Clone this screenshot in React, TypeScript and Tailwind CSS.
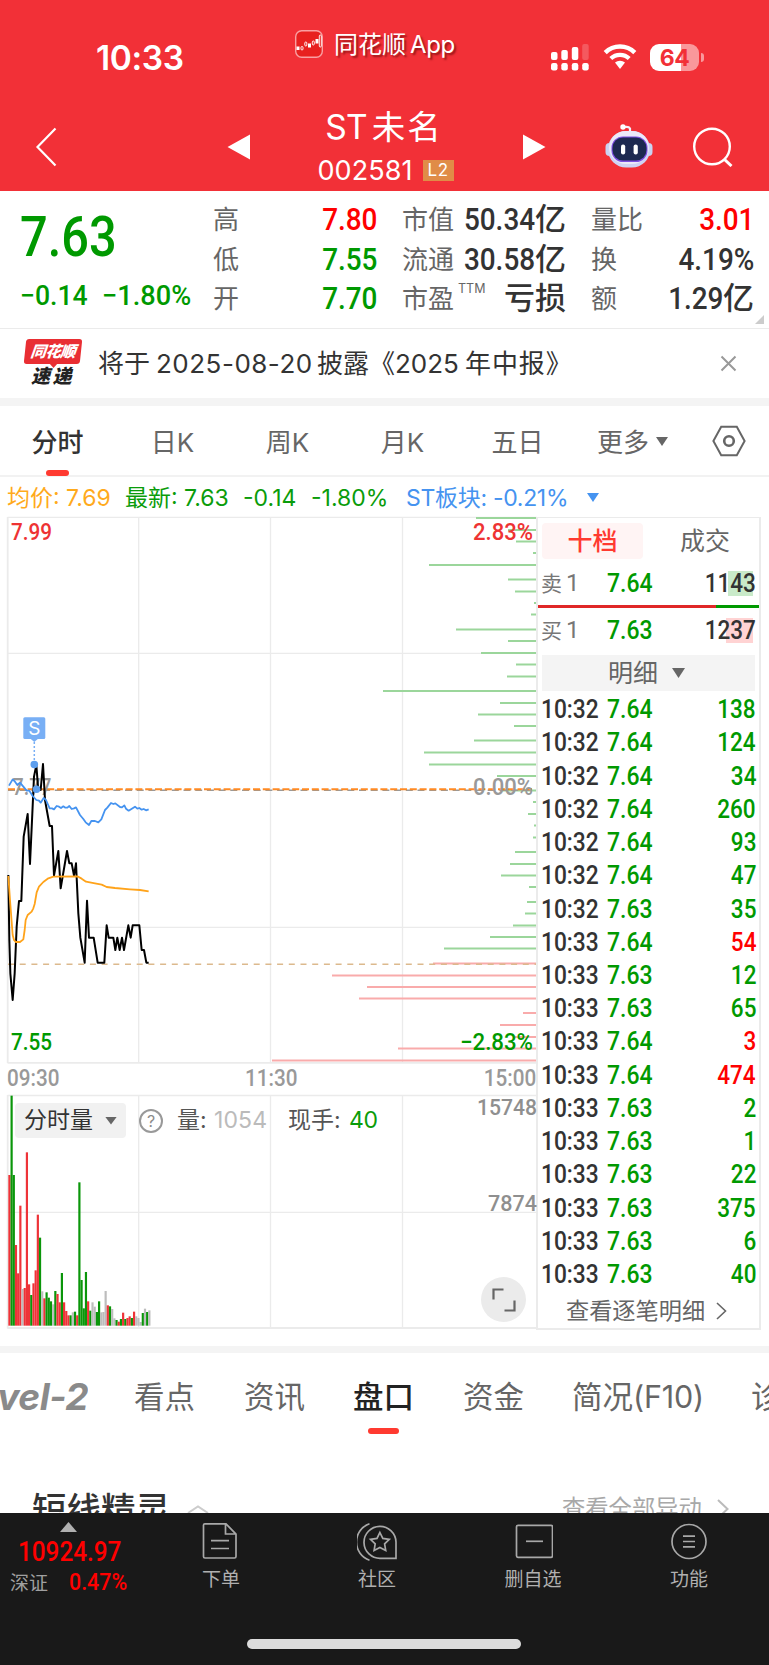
import type { ReactNode } from 'react';
import { clsx } from 'clsx';

type Tone = 'up' | 'down' | 'flat';

const TEXT_TONE: Record<Tone, string> = {
  up: 'text-[#ff0000]',
  down: 'text-[#009900]',
  flat: 'text-[#333333]',
};

const DIN = "[font-family:Roboto,'Noto_Sans_CJK_SC',sans-serif]";

// [y, left] of every order stacked on the right edge of the price chart
const SELL_DEPTH: [number, number][] = [
  [518, 476], [530, 508], [541.5, 516], [553, 533], [565, 429], [579.5, 508], [591.5, 515], [603, 534],
  [614.5, 531], [629.5, 456], [641, 508], [653, 481], [664.5, 516], [676.5, 507], [691, 383], [703, 500],
  [714.5, 478], [726, 514], [740.5, 474], [752.5, 424], [764.5, 429], [776, 497], [790.5, 502], [802, 533],
  [814, 528], [825.5, 534], [837.5, 533], [852, 515], [864, 510], [875.5, 501], [887, 529], [902, 527],
  [913.5, 525], [925.5, 513], [937, 490], [948.5, 444],
];

const BUY_DEPTH: [number, number][] = [
  [963.5, 433], [975.5, 332], [987, 367], [998.5, 359], [1013, 523], [1025, 500], [1037, 515], [1048.5, 398], [1060.5, 272],
];

const PRICE =
  '25,405 28,600 31,700 38,780 44,700 50,560 57,483 64,483 71,290 83,222 90,372 97,220 102,110 109,75 114,140 122,150 129,72 135,180 149,258 156,258 162,407 175,333 182,445 201,333 208,370 215,370 222,407 228,370 235,520 241,593 254,668 261,482 267,593 281,593 293,668 313,668 320,556 326,593 340,593 346,630 352,593 359,630 366,593 372,630 385,556 392,593 398,556 418,556 425,630 432,630 439,668 446,668';
const SECTOR =
  '27,137 38,118 45,125 52,135 60,128 70,140 80,152 88,152 98,168 109,180 117,182 122,188 131,174 138,180 149,205 156,205 162,208 170,198 177,200 183,204 190,199 196,203 202,203 208,198 215,207 222,205 228,202 240,225 250,237 257,247 267,255 274,243 285,243 295,247 304,238 315,210 322,203 333,189 340,192 346,190 360,201 366,202 373,196 378,206 386,212 405,200 412,206 418,204 425,209 431,207 438,211 446,208';
const AVERAGE =
  '25,408 30,480 38,585 42,600 47,606 60,606 70,598 74,570 77,540 83,525 95,515 100,505 104,492 110,457 117,440 130,426 145,415 160,410 232,409 245,416 258,425 285,430 305,434 320,441 345,444 390,448 420,450 446,454';

// r = rise, g = fall, n = unchanged
const VOLUME: [string, number][] = [
  ['r', 452], ['g', 690], ['g', 452], ['r', 242], ['r', 157], ['r', 360], ['n', 110], ['r', 113], ['r', 520], ['r', 124],
  ['g', 92], ['r', 127], ['r', 166], ['r', 333], ['g', 264], ['n', 103], ['r', 82], ['g', 100], ['g', 84], ['g', 73],
  ['n', 64], ['g', 104], ['r', 95], ['r', 70], ['g', 158], ['r', 70], ['r', 44], ['r', 31], ['g', 31], ['n', 40],
  ['g', 42], ['r', 31], ['g', 430], ['g', 137], ['g', 52], ['g', 161], ['r', 73], ['g', 45], ['n', 70], ['n', 57],
  ['g', 41], ['g', 73], ['n', 40], ['n', 41], ['n', 104], ['r', 61], ['g', 58], ['n', 50], ['n', 22], ['g', 17],
  ['r', 12], ['g', 20], ['r', 39], ['g', 20], ['r', 23], ['r', 28], ['g', 23], ['r', 42], ['n', 28], ['n', 23],
  ['n', 11], ['g', 38], ['n', 51], ['g', 41], ['n', 46],
];
const VOLUME_FILL: Record<string, string> = { r: '#ee3338', g: '#0a960a', n: '#bdbdbd' };

const TICKS: [string, string, string, Tone][] = [
  ['10:32', '7.64', '138', 'down'],
  ['10:32', '7.64', '124', 'down'],
  ['10:32', '7.64', '34', 'down'],
  ['10:32', '7.64', '260', 'down'],
  ['10:32', '7.64', '93', 'down'],
  ['10:32', '7.64', '47', 'down'],
  ['10:32', '7.63', '35', 'down'],
  ['10:33', '7.64', '54', 'up'],
  ['10:33', '7.63', '12', 'down'],
  ['10:33', '7.63', '65', 'down'],
  ['10:33', '7.64', '3', 'up'],
  ['10:33', '7.64', '474', 'up'],
  ['10:33', '7.63', '2', 'down'],
  ['10:33', '7.63', '1', 'down'],
  ['10:33', '7.63', '22', 'down'],
  ['10:33', '7.63', '375', 'down'],
  ['10:33', '7.63', '6', 'down'],
  ['10:33', '7.63', '40', 'down'],
];

function StatusBar() {
  return (
    <div className="flex h-[104px] pt-[30px] text-white">
      <div className="ml-[96px] mt-[11px] w-[199px] text-[33.5px] font-semibold leading-[34px] tracking-[-0.4px]">10:33</div>
      <svg width="28" height="28" viewBox="0 0 28 28" className="shrink-0">
        <rect x="0.7" y="0.7" width="26.6" height="26.6" rx="6" fill="#e8201f" stroke="#f9a0a2" strokeWidth="1.4" />
        <g fill="#fff">
          <rect x="1.5" y="16.5" width="3" height="3.5" />
          <rect x="13" y="13.5" width="3" height="4" />
          <rect x="20.5" y="9" width="3" height="4.5" />
        </g>
        <g fill="none" stroke="#fff" strokeWidth="0.9">
          <rect x="6" y="16.5" width="2" height="3.5" rx="1" />
          <rect x="9.8" y="12" width="2" height="4" rx="1" />
          <rect x="17.3" y="11" width="2" height="4" rx="1" />
          <rect x="24.3" y="5" width="2" height="12" rx="1" />
        </g>
      </svg>
      <div className="ml-[11px] mt-[2px] w-[217px] shrink-0 text-[24px] leading-[26px] [text-shadow:2px_2px_2px_rgba(90,0,0,0.6)]">
        同花顺<span className="ml-[4px] tracking-[-0.4px]">App</span>
      </div>
      <svg width="38" height="28" viewBox="0 0 38 28" fill="#fff" className="mt-[14px] shrink-0">
        <rect x="0" y="8" width="6.5" height="8" rx="2" />
        <rect x="10.3" y="6" width="6.5" height="10" rx="2" />
        <rect x="20.8" y="3" width="6.5" height="13" rx="2" />
        <rect x="31.2" y="0" width="6.5" height="16" rx="2" opacity="0.2" />
        <rect x="0" y="19" width="6.5" height="7.5" rx="2.2" />
        <rect x="10.3" y="19" width="6.5" height="7.5" rx="2.2" />
        <rect x="20.8" y="19" width="6.5" height="7.5" rx="2.2" />
        <rect x="31.2" y="19" width="6.5" height="7.5" rx="2.2" />
      </svg>
      <svg width="34" height="25" viewBox="0 0 34 25" className="ml-[14px] mt-[14px] shrink-0">
        <path d="M2.2 8.6a21 21 0 0 1 29.6 0" fill="none" stroke="#fff" strokeWidth="4.4" />
        <path d="M7.8 14.6a13.2 13.2 0 0 1 18.4 0" fill="none" stroke="#fff" strokeWidth="4.2" />
        <path d="M12 18.6a7.4 7.4 0 0 1 10 0L17 25z" fill="#fff" />
      </svg>
      <div className="ml-[13px] mt-[13.5px] flex h-[27.5px] items-center">
        <div className="h-[27.5px] w-[49px] rounded-[9px] bg-[linear-gradient(90deg,#fff_64%,#f9989b_64%)] text-center text-[23px] font-bold leading-[28px] tracking-[-0.6px] text-[#f23037]">
          64
        </div>
        <div className="ml-[1.5px] h-[9px] w-[3px] rounded-r-full bg-[#f9989b]" />
      </div>
    </div>
  );
}

function Robot() {
  return (
    <svg width="48" height="44" viewBox="0 0 48 44" className="shrink-0">
      <path d="M25 8V4.5Q24 2.5 20 3" fill="none" stroke="#f3f0fb" strokeWidth="2.2" />
      <circle cx="18" cy="3" r="2.7" fill="#fff" />
      <rect x="0.5" y="19" width="8" height="13" rx="4" fill="#c9d3f2" />
      <rect x="39.5" y="19" width="8" height="13" rx="4" fill="#c9d3f2" />
      <rect x="3" y="7" width="42" height="36.5" rx="18" fill="#cfd3f4" />
      <rect x="4" y="7" width="40" height="33" rx="17" fill="#ebe9f9" />
      <rect x="6.5" y="12.5" width="36" height="25.5" rx="11.5" fill="#7c4fe0" />
      <rect x="7.5" y="13.5" width="34" height="23" rx="10.5" fill="#1d2950" />
      <rect x="16" y="20.5" width="4.2" height="10" rx="2" fill="#fff" />
      <rect x="28.6" y="20.5" width="4.2" height="10" rx="2" fill="#fff" />
    </svg>
  );
}

function TitleBar() {
  return (
    <div className="flex h-[87px] text-white">
      <svg width="22" height="40" viewBox="0 0 22 40" className="ml-[35px] mt-[23px] shrink-0">
        <path d="M20.5 1.5 2.5 20l18 18.5" fill="none" stroke="#fff" strokeWidth="2.2" />
      </svg>
      <svg width="23" height="26" viewBox="0 0 23 26" className="ml-[170px] mt-[30px] shrink-0">
        <path d="M23 0.5v25L0.5 13z" fill="#fff" />
      </svg>
      <div className="ml-[52px] w-[156px] text-center">
        <div className="ml-[8px] mt-[6px] whitespace-nowrap text-[33.5px] leading-[35px]">
          <span className="tracking-[-0.8px]">ST</span>
          <span className="ml-[5px] tracking-[2px]">未名</span>
        </div>
        <div className="mt-[15px] flex items-center justify-center pl-[11px]">
          <span className="text-[27px] leading-[21px] tracking-[0.1px]">002581</span>
          <span className="ml-[10px] h-[21px] w-[31px] bg-[#e08c47] text-[17px] leading-[21px] tracking-[0.5px]">L2</span>
        </div>
      </div>
      <svg width="23" height="26" viewBox="0 0 23 26" className="ml-[65px] mt-[30px] shrink-0">
        <path d="M0 0.5v25L22.5 13z" fill="#fff" />
      </svg>
      <div className="ml-[59px] mt-[20px]">
        <Robot />
      </div>
      <svg width="40" height="40" viewBox="0 0 40 40" className="ml-[40px] mt-[23px] shrink-0">
        <circle cx="19" cy="19.5" r="17.8" fill="none" stroke="#fff" strokeWidth="2.4" />
        <path d="M31 32l7.5 7" stroke="#fff" strokeWidth="3" />
      </svg>
    </div>
  );
}

function Stat({ label, value, unit, tone = 'flat' }: { label: ReactNode; value?: string; unit?: string; tone?: Tone }) {
  return (
    <div className="flex h-[39.7px] items-center">
      <span className="mr-auto whitespace-nowrap text-[26px] text-[#666666]">{label}</span>
      <span className={clsx(DIN, 'flex text-[31px] font-medium', TEXT_TONE[tone])}>
        {value && <span className="-ml-[20px] inline-block origin-right scale-x-90">{value}</span>}
        {unit}
      </span>
    </div>
  );
}

function Quote() {
  return (
    <div className="relative flex h-[138px] border-b border-[#ebebeb] pt-[9px] leading-[38px]">
      <div className={clsx(DIN, 'ml-[20px] w-[193px] text-[#009900]')}>
        <div className="mt-[8px] w-[112px] origin-left scale-x-[0.87] text-[56px] font-medium leading-[58px]">7.63</div>
        <div className="mt-[11px] flex text-[28px] font-medium">
          <span className="w-[82px] origin-left scale-x-95">−0.14</span>
          <span className="origin-left scale-x-[0.97]">−1.80%</span>
        </div>
      </div>
      <div className="w-[164px]">
        <Stat label="高" value="7.80" tone="up" />
        <Stat label="低" value="7.55" tone="down" />
        <Stat label="开" value="7.70" tone="down" />
      </div>
      <div className="ml-[25px] w-[164px]">
        <Stat label="市值" value="50.34" unit="亿" />
        <Stat label="流通" value="30.58" unit="亿" />
        <Stat
          label={
            <span className="relative top-[2px]">
              市盈<span className="relative -top-[15px] ml-[4px] text-[12.5px]">TTM</span>
            </span>
          }
          unit="亏损"
        />
      </div>
      <div className="ml-[25px] w-[163px]">
        <Stat label="量比" value="3.01" tone="up" />
        <Stat label="换" value="4.19%" />
        <Stat label="额" value="1.29" unit="亿" />
      </div>
      <div className="absolute bottom-[4px] right-[5px] size-[9px] bg-[#cccccc] [clip-path:polygon(100%_0,100%_100%,0_100%)]" />
    </div>
  );
}

function Notice() {
  return (
    <div className="flex h-[77px] border-b-8 border-[#f4f4f4] pt-[10px]">
      <div className="relative ml-[25px] w-[57px] shrink-0 font-black italic">
        <div className="h-[25px] w-[56px] -skew-x-6 rounded-[3px] bg-[#e92e33] text-center text-[15.5px] leading-[25px] tracking-[-0.6px] text-white">
          同花顺
        </div>
        <div className="absolute left-[24px] top-[24px] h-[5px] w-[9px] bg-[#e92e33] [clip-path:polygon(0_0,100%_0,50%_100%)]" />
        <div className="ml-[6px] mt-[3px] whitespace-nowrap text-[19px] leading-[19px] tracking-[2.5px] text-[#222222]">速递</div>
      </div>
      <div className="ml-[16px] flex w-[622px] whitespace-nowrap text-[26px] leading-[49px] text-[#333333]">
        <span className="w-[58px]">将于</span>
        <span className="w-[161px] tracking-[0.5px]">2025-08-20</span>
        <span className="w-[78px]">披露《</span>
        <span className="w-[70px]">2025</span>
        <span className="tracking-[0.9px]">年中报》</span>
      </div>
      <svg width="17" height="17" viewBox="0 0 17 17" className="mt-[16px] shrink-0">
        <path d="M1.5 1.5l14 14M15.5 1.5l-14 14" stroke="#999" strokeWidth="2" />
      </svg>
    </div>
  );
}

function PeriodTabs() {
  return (
    <div className="flex h-[71px] border-b-2 border-[#f2f2f2] pb-px text-[26px] leading-[73px] text-[#666666]">
      <div className="relative w-[115px] text-center font-medium text-[#333333]">
        分时
        <div className="absolute -bottom-[2px] left-[46px] h-[6px] w-[23px] rounded-full bg-[#ff3a30]" />
      </div>
      {['日K', '周K', '月K', '五日'].map((name) => (
        <div key={name} className="w-[115px] text-center">
          {name}
        </div>
      ))}
      <div className="ml-[22px] w-[59px]">更多</div>
      <div className="mt-[31px] h-[9px] w-[12px] bg-[#666666] [clip-path:polygon(0_0,100%_0,50%_100%)]" />
      <svg width="34" height="32" viewBox="0 0 34 32" className="ml-[44px] mt-[19px]" fill="none" stroke="#666" strokeWidth="2">
        <path d="M9.2 1.8h15.6L32.6 16l-7.8 14.2H9.2L1.4 16z" />
        <circle cx="17" cy="16" r="4.8" strokeWidth="2.6" />
      </svg>
    </div>
  );
}

function Legend() {
  return (
    <div className="flex h-[39px] items-center whitespace-nowrap pl-[7px] pt-[2px] text-[23px] leading-[36px] text-[#0a9c0a]">
      <span className="w-[118px] text-[#ffaa1c]">均价: 7.69</span>
      <span className="w-[118px]">最新: 7.63</span>
      <span className="w-[68px]">-0.14</span>
      <span className="w-[95px]">-1.80%</span>
      <span className="w-[181px] tracking-[-0.3px] text-[#4593f0]">ST板块: -0.21%</span>
      <span className="h-[9px] w-[12px] bg-[#4593f0] [clip-path:polygon(0_0,100%_0,50%_100%)]" />
    </div>
  );
}

function ChartLabel({ x, y, width, fill, children }: { x: number; y: number; width: number; fill: string; children: string }) {
  return (
    <text x={x} y={y} fill={fill} textLength={width} lengthAdjust="spacingAndGlyphs">
      {children}
    </text>
  );
}

function PriceChart() {
  return (
    <svg width="538" height="548" viewBox="0 516 538 548" className={clsx(DIN, 'block text-[23px] font-medium')}>
      <g stroke="#ebebeb" strokeWidth="1.3" fill="none">
        <path d="M7.5 517.3H537M7.5 653.3H537M7.5 927.3H537M138.7 517V1063M270.5 517V1063M402.5 517V1063" />
        <path d="M7.5 1062.8H537M7.7 517V1063" strokeWidth="1.8" />
      </g>
      <g stroke="#9bd69b" strokeWidth="2">
        {SELL_DEPTH.map(([y, x]) => (
          <line key={y} x1={x} x2="536" y1={y} y2={y} />
        ))}
      </g>
      <g stroke="#f9abab" strokeWidth="2">
        {BUY_DEPTH.map(([y, x]) => (
          <line key={y} x1={x} x2="536" y1={y} y2={y} />
        ))}
      </g>
      <path d="M8 790.3H532" stroke="#999" strokeWidth="1.6" strokeDasharray="7 4.7" />
      <path d="M8 789.2H532" stroke="#ff8a24" strokeWidth="2" strokeDasharray="7 2.8" />
      <path d="M8 964.3H536" stroke="#dcb98d" strokeWidth="1.4" strokeDasharray="6 5.7" />
      <ChartLabel x={11} y={539.5} width={41} fill="#ee3333">7.99</ChartLabel>
      <ChartLabel x={473} y={539.5} width={60} fill="#ee3333">2.83%</ChartLabel>
      <ChartLabel x={12.5} y={794.5} width={39} fill="#999999">7.77</ChartLabel>
      <ChartLabel x={473} y={794.5} width={60} fill="#999999">0.00%</ChartLabel>
      <g transform="translate(0 740) scale(0.33333)" fill="none" strokeLinejoin="round">
        <polyline points={PRICE} stroke="#000" strokeWidth="6" />
        <polyline points={AVERAGE} stroke="#ffa31a" strokeWidth="5.4" />
        <polyline points={SECTOR} stroke="#4593f0" strokeWidth="5.4" />
      </g>
      <path d="M34.3 742V761" stroke="#78aff5" strokeWidth="1.5" strokeDasharray="2 2" />
      <circle cx="34.3" cy="764.5" r="3.8" fill="#5c9eed" />
      <circle cx="36.5" cy="789.2" r="3.8" fill="#5c9eed" />
      <rect x="23.3" y="717.3" width="22" height="21.6" rx="1.5" fill="#78aff5" />
      <path d="M30.5 738.8h7.6l-3.8 3.2z" fill="#78aff5" />
      <text x="34.3" y="735" fill="#fff" textAnchor="middle" className="[font-family:Inter] text-[19px] font-normal">S</text>
      <ChartLabel x={11} y={1049.5} width={41} fill="#009900">7.55</ChartLabel>
      <ChartLabel x={460} y={1049.5} width={73} fill="#009900">−2.83%</ChartLabel>
    </svg>
  );
}

function VolumeChart() {
  return (
    <div className="relative h-[236px]">
      <svg width="538" height="236" viewBox="0 1094 538 236" className={clsx(DIN, 'block text-[22.5px] font-medium')}>
        <g stroke="#ebebeb" strokeWidth="1.3" fill="none">
          <path d="M7.5 1095.5H537M7.5 1212.4H537M138.7 1095V1328M270.5 1095V1328M402.5 1095V1328" />
          <path d="M7.5 1328H537M7.7 1095V1328.5" strokeWidth="1.8" />
        </g>
        <g transform="translate(0 1060) scale(0.33333)">
          {VOLUME.map(([kind, h], i) => (
            <rect key={i} x={25 + i * 6.56} y={797 - h} width="6.56" height={h} fill={VOLUME_FILL[kind]} />
          ))}
        </g>
        <ChartLabel x={477} y={1115} width={60} fill="#8f8f8f">15748</ChartLabel>
        <ChartLabel x={488} y={1211} width={49} fill="#8f8f8f">7874</ChartLabel>
      </svg>
      <div className="absolute left-[15px] top-[9px] flex items-center whitespace-nowrap text-[23px] leading-[35px] text-[#555555]">
        <div className="flex h-[35px] w-[111px] items-center rounded-[4px] bg-[#f1f1f1] pl-[9px] text-[#333333]">
          <span className="w-[81px]">分时量</span>
          <span className="h-[8px] w-[12px] bg-[#666666] [clip-path:polygon(0_0,100%_0,50%_100%)]" />
        </div>
        <span className="ml-[13px] size-[24px] rounded-full border-2 border-[#999999] text-center text-[16px] leading-[20px] text-[#8c8c8c]">?</span>
        <span className="ml-[14px] w-[37px]">量:</span>
        <span className="w-[74px] tracking-[0.1px] text-[#bbbbbb]">1054</span>
        <span className="w-[61px]">现手:</span>
        <span className="tracking-[-0.4px] text-[#0a9c0a]">40</span>
      </div>
      <div className="absolute bottom-[8px] right-[10px] flex size-[45px] items-center justify-center rounded-full bg-[#ebebeb]">
        <svg width="24" height="24" viewBox="0 0 24 24" fill="none" stroke="#666" strokeWidth="2.2">
          <path d="M1.5 11.5v-10h10M22.5 12.5v10h-10" />
        </svg>
      </div>
    </div>
  );
}

function Level({ label, price, volume, mark }: { label: string; price: string; volume: string; mark: string }) {
  return (
    <div className="flex h-[43px] items-center px-[3px]">
      <span className="w-[66px] text-[21px] text-[#777777]">
        {label}
        <span className={clsx(DIN, 'ml-[4px] text-[24px]')}>1</span>
      </span>
      <span className={clsx(DIN, 'origin-left scale-x-[0.92] pt-px text-[25px] font-medium text-[#009900]')}>{price}</span>
      <span className={clsx(DIN, mark, 'ml-auto flex h-[25px] w-[56px] items-center justify-end text-[25px] font-medium text-[#333333]')}>
        <span className="origin-right scale-x-90 pt-px">{volume}</span>
      </span>
    </div>
  );
}

function OrderBook() {
  return (
    <div className="h-[813px] w-[225px] border-2 border-t border-[#ebebeb] leading-[30px]">
      <div className="mt-[5px] flex pl-[4px] text-[25px] leading-[36px] text-[#666666]">
        <div className="h-[36px] w-[101px] rounded-[4px] bg-[#fff4f4] text-center font-medium text-[#ff3a30]">十档</div>
        <div className="ml-[37px]">成交</div>
      </div>
      <div className="pt-[3px]">
        <Level label="卖" price="7.64" volume="1143" mark="bg-[linear-gradient(#c9eac9,#c9eac9)] bg-no-repeat bg-[length:25px_25px] bg-[position:28px_0]" />
      </div>
      <div className="flex h-[3px]">
        <div className="w-[178px] bg-[#e02828]" />
        <div className="flex-1 bg-[#009900]" />
      </div>
      <div className="pt-px">
        <Level label="买" price="7.63" volume="1237" mark="bg-[linear-gradient(#ffd3d3,#ffd3d3)] bg-no-repeat bg-[length:27px_25px] bg-[position:26px_0]" />
      </div>
      <div className="ml-[4px] mt-[3px] flex h-[36px] w-[213px] items-center bg-[#f4f4f4] pl-[66px] text-[25px] text-[#666666]">
        明细
        <span className="ml-[14px] h-[10px] w-[13px] bg-[#666666] [clip-path:polygon(0_0,100%_0,50%_100%)]" />
      </div>
      <div className={clsx(DIN, 'px-[3px] pt-[2.5px] text-[25px] font-medium')}>
        {TICKS.map(([time, price, volume, tone], i) => (
          <div key={i} className="flex h-[33.24px] items-center">
            <span className="w-[66px] origin-left scale-x-[0.91] text-[#333333]">{time}</span>
            <span className="origin-left scale-x-[0.92] text-[#009900]">{price}</span>
            <span className={clsx('ml-auto origin-right scale-x-90', TEXT_TONE[tone])}>{volume}</span>
          </div>
        ))}
      </div>
      <div className="flex items-center pl-[28px] pt-[2px] text-[23.2px] leading-[34px] text-[#666666]">
        查看逐笔明细
        <svg width="11" height="18" viewBox="0 0 11 18" className="ml-[11px]">
          <path d="M1 1l8.5 8L1 17" fill="none" stroke="#666" strokeWidth="1.6" />
        </svg>
      </div>
    </div>
  );
}

function SectionTabs() {
  return (
    <div className="flex h-[133px] whitespace-nowrap pt-[22px] text-[30.5px] leading-[44px] text-[#666666]">
      <div className="flex w-[88px] shrink-0 justify-end overflow-hidden font-bold italic text-[#8a8a8a]">
        <span className="text-[37px] tracking-[-0.5px]">Level-2</span>
      </div>
      <div className="ml-[46px] w-[110px] shrink-0">看点</div>
      <div className="w-[109px] shrink-0">资讯</div>
      <div className="w-[110px] shrink-0 font-medium text-[#222222]">
        盘口
        <div className="ml-[15px] mt-[9px] h-[6px] w-[31px] rounded-full bg-[#ff3a30]" />
      </div>
      <div className="w-[109px] shrink-0">资金</div>
      <div className="w-[179px] shrink-0">
        简况<span className="tracking-[-0.2px]">(F10)</span>
      </div>
      <div className="shrink-0">诊</div>
    </div>
  );
}

function BottomItem({ label, children }: { label: string; children: ReactNode }) {
  return (
    <div className="flex w-[156px] flex-col items-center pt-[8px]">
      <svg width="40" height="40" viewBox="0 0 40 40" fill="none" stroke="#a8a8a8" strokeWidth="1.7">
        {children}
      </svg>
      <span className="mt-[7px] text-[19px] leading-[24px] text-[#b0b0b0]">{label}</span>
    </div>
  );
}

function BottomBar() {
  return (
    <div className="relative flex h-[152px] bg-[#191919]">
      <div className={clsx(DIN, 'w-[143px] font-medium text-[#ff0000]')}>
        <div className="ml-[60px] mt-[9px] h-[10px] w-[17px] bg-[#b0b0b0] [clip-path:polygon(50%_0,100%_100%,0_100%)]" />
        <div className="ml-[18px] mt-[5px] origin-left scale-x-[0.9] text-[27px] leading-[30px]">10924.97</div>
        <div className="ml-[10px] flex leading-[30px]">
          <span className="w-[59px] pt-[2px] text-[19px] font-normal text-[#a0a0a0]">深证</span>
          <span className="origin-left scale-x-[0.93] pt-px text-[23px]">0.47%</span>
        </div>
      </div>
      <BottomItem label="下单">
        <path d="M3.800 2.800h21.200l10 10.300v22.400a1.500 1.500 0 0 1-1.500 1.500H4a1.500 1.500 0 0 1-1.500-1.500V4a1.300 1.300 0 0 1 1.300-1.200M24.500 3v10h10M10 19.600h18M10 27.500h18" />
      </BottomItem>
      <BottomItem label="社区">
        <path d="M39 37.300H23.400A16 16 0 1 1 39 21zM12.500 2.700a19.300 19.300 0 0 0 0 36.500" />
        <path d="M22.900 11.500l2.900 5.900 6.500.9-4.700 4.600 1.100 6.500-5.800-3-5.800 3 1.100-6.500-4.700-4.600 6.500-.9z" />
      </BottomItem>
      <BottomItem label="删自选">
        <rect x="3.500" y="4.300" width="36" height="32" rx="1.500" />
        <path d="M13 20.300h17" />
      </BottomItem>
      <BottomItem label="功能">
        <circle cx="20" cy="20.500" r="17" />
        <path d="M14 15.200h12M14 20.500h12M14 25.800h12" />
      </BottomItem>
      <div className="absolute bottom-[16px] left-[247px] h-[10px] w-[274px] rounded-full bg-[#dcdcdc]" />
    </div>
  );
}

export default function App() {
  return (
    <div className="h-[1665px] w-[769px] overflow-hidden bg-white [font-family:Inter,'Noto_Sans_CJK_SC',sans-serif]">
      <div className="h-[191px] bg-[#f23037]">
        <StatusBar />
        <TitleBar />
      </div>
      <Quote />
      <Notice />
      <PeriodTabs />
      <Legend />
      <div className="flex h-[830px]">
        <div className="w-[536px]">
          <PriceChart />
          <div className={clsx(DIN, 'flex h-[30px] justify-between pl-[7px] text-[23px] font-medium leading-[30px] text-[#999999]')}>
            <span className="origin-left scale-x-90">09:30</span>
            <span className="scale-x-90">11:30</span>
            <span className="origin-right scale-x-90">15:00</span>
          </div>
          <VolumeChart />
        </div>
        <div className="pt-px">
          <OrderBook />
        </div>
      </div>
      <div className="h-[7px] bg-[#f4f4f4]" />
      <SectionTabs />
      <div className="flex h-[27px] overflow-hidden pl-[32px]">
        <span className="mt-[4px] w-[155px] text-[34.5px] font-medium leading-[40px] text-[#333333]">短线精灵</span>
        <svg width="22" height="10" viewBox="0 0 22 10" className="mt-[18px]">
          <path d="M1 9l10-6.500L21 9" fill="none" stroke="#ccc" strokeWidth="2" />
        </svg>
        <span className="ml-[353px] mt-[8px] w-[155px] text-[23.3px] leading-[30px] text-[#a8a8a8]">查看全部异动</span>
        <svg width="12" height="20" viewBox="0 0 12 20" className="mt-[13px]">
          <path d="M1 1l9.500 9L1 19" fill="none" stroke="#bbb" strokeWidth="2" />
        </svg>
      </div>
      <BottomBar />
    </div>
  );
}
